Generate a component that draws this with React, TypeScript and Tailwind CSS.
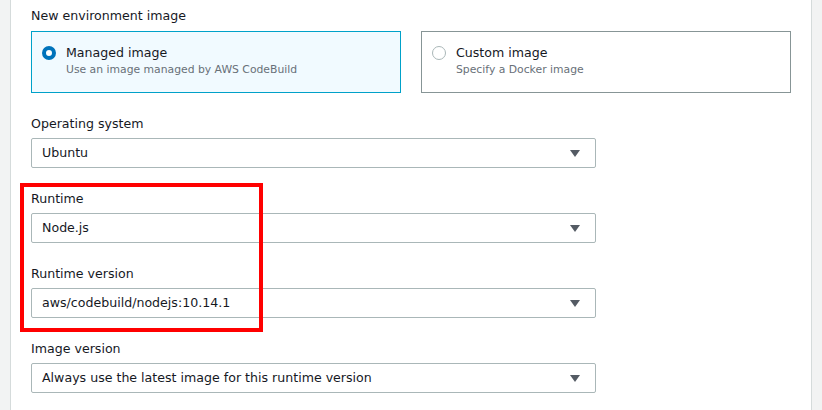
import type { ReactNode } from "react";

const font = { fontFamily: '"DejaVu Sans", "Liberation Sans", sans-serif' };

function Caret() {
  return (
    <svg width="10" height="7" viewBox="0 0 10 7" className="shrink-0">
      <path d="M0 0h10L5 7z" fill="#545b64" />
    </svg>
  );
}

function Field({ label, value }: { label: string; value: string }) {
  return (
    <div className="flex flex-col">
      <div className="h-[23px] text-[12.6px] leading-[18px] text-[#16191f]">{label}</div>
      <div className="flex h-[30px] w-[565px] items-center justify-between rounded-[2px] border border-[#aab7b8] bg-white pl-[10px] pr-[15px] text-[12.6px] text-[#16191f]">
        <span>{value}</span>
        <Caret />
      </div>
    </div>
  );
}

function ImageCard({
  title,
  desc,
  selected,
}: {
  title: string;
  desc: string;
  selected?: boolean;
}) {
  return (
    <div
      className={
        selected
          ? "flex h-[62px] flex-1 items-start gap-[10px] border border-[#00a1c9] bg-[#f1faff] pl-[10px] pt-[12px]"
          : "flex h-[62px] flex-1 items-start gap-[10px] border border-[#879596] bg-white pl-[10px] pt-[12px]"
      }
    >
      {selected ? (
        <span className="mt-[2px] box-border h-[14px] w-[14px] rounded-full border-[4px] border-[#0073bb] bg-white" />
      ) : (
        <span className="mt-[2px] box-border h-[14px] w-[14px] rounded-full border border-[#aab7b8] bg-white" />
      )}
      <div className="flex flex-col">
        <span className="text-[12.6px] leading-[18px] text-[#16191f]">{title}</span>
        <span className="text-[10.8px] leading-[16px] text-[#687078]">{desc}</span>
      </div>
    </div>
  );
}

function Panel({ children }: { children: ReactNode }) {
  return (
    <div className="relative flex-1 border-x border-[#d5dbdb] bg-white px-[20px] pt-[7px]">
      {children}
    </div>
  );
}

export default function App() {
  return (
    <div className="flex h-[410px] w-[822px] overflow-hidden bg-[#f2f3f3]" style={font}>
      <div className="w-[10px] shrink-0" />
      <Panel>
        <div className="h-[24px] text-[12.6px] leading-[18px] text-[#16191f]">New environment image</div>
        <div className="flex gap-[20px]">
          <ImageCard title="Managed image" desc="Use an image managed by AWS CodeBuild" selected />
          <ImageCard title="Custom image" desc="Specify a Docker image" />
        </div>
        <div className="mt-[22px] flex flex-col gap-[22px]">
          <Field label="Operating system" value="Ubuntu" />
          <Field label="Runtime" value="Node.js" />
          <Field label="Runtime version" value="aws/codebuild/nodejs:10.14.1" />
          <Field label="Image version" value="Always use the latest image for this runtime version" />
        </div>
        {/* annotation box */}
        <div className="pointer-events-none absolute left-[9px] top-[183px] h-[149px] w-[243px] border-[4px] border-[#ff0000]" />
      </Panel>
      <div className="w-[10px] shrink-0" />
    </div>
  );
}
